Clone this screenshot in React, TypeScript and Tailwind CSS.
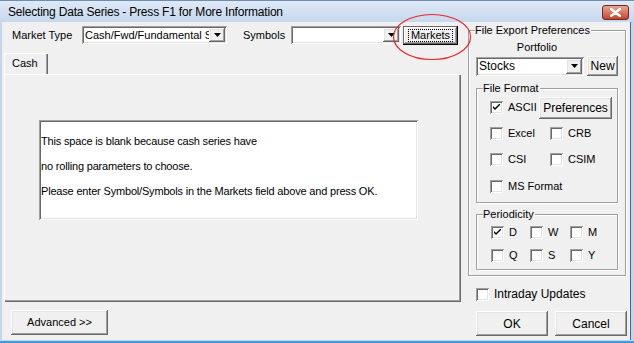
import React from 'react';

const raised =
  'shadow-[inset_-1px_-1px_0_#696969,inset_1px_1px_0_#ffffff,inset_-2px_-2px_0_#a0a0a0,inset_2px_2px_0_#e3e3e3]';
const sunken =
  'shadow-[inset_1px_1px_0_#a0a0a0,inset_-1px_-1px_0_#ffffff,inset_2px_2px_0_#696969,inset_-2px_-2px_0_#e3e3e3]';

const Arrow = () => (
  <div className={`w-[16px] h-full bg-[#f0f0f0] flex items-center justify-center ${raised}`}>
    <svg width="7" height="4" viewBox="0 0 7 4">
      <path d="M0 0h7L3.5 4z" fill="#000" />
    </svg>
  </div>
);

const Combo = ({ text, className }: { text: string; className: string }) => (
  <div className={`bg-white flex items-stretch p-[2px] ${sunken} ${className}`}>
    <div className="flex-1 overflow-hidden whitespace-nowrap pl-[1px] leading-[15px]">{text}</div>
    <Arrow />
  </div>
);

const Check = ({ checked }: { checked?: boolean }) => (
  <div className={`w-[13px] h-[13px] bg-white shrink-0 flex items-center justify-center ${sunken}`}>
    {checked && (
      <svg width="7" height="7" viewBox="0 0 7 7">
        <path d="M0 2l2 2 5-5v2L2 6 0 4z" fill="#000" />
      </svg>
    )}
  </div>
);

const CheckItem = ({ label, checked, className }: { label: string; checked?: boolean; className?: string }) => (
  <div className={`flex items-center gap-[5px] ${className ?? ''}`}>
    <Check checked={checked} />
    <span>{label}</span>
  </div>
);

const Group = ({ title, className, children }: { title: string; className: string; children: React.ReactNode }) => (
  <div className={`relative border border-[#a0a0a0] shadow-[1px_1px_0_#ffffff,inset_1px_1px_0_#ffffff] ${className}`}>
    <span className="absolute left-[6px] top-[-8px] bg-[#f0f0f0] leading-[14px] pr-[1px]">{title}</span>
    {children}
  </div>
);

const Button = ({ label, className }: { label: string; className: string }) => (
  <div className={`bg-[#f0f0f0] flex items-center justify-center ${raised} ${className}`}>{label}</div>
);

export default function App() {
  return (
    <div className="relative w-[634px] h-[343px] flex flex-col bg-[#c3d6ee] text-[11px] text-black font-['Liberation_Sans',Arial,sans-serif] overflow-hidden border-b-[2px] border-[#3f9be3]">
      {/* title bar */}
      <div className="h-[22px] shrink-0 flex items-center justify-between pl-[8px] pr-[5px] bg-gradient-to-b from-[#dfe9f6] to-[#c6d8ee] border-t border-[#6f8eb4]">
        <span className="text-[12px] tracking-[-0.2px] leading-none pt-[1px]">
          Selecting Data Series - Press F1 for More Information
        </span>
        <div className="w-[27px] h-[15px] mt-[2px] rounded-[3px] border border-[#6b2a22] bg-gradient-to-b from-[#e8a496] to-[#c7402b] flex items-center justify-center">
          <svg width="11" height="9" viewBox="0 0 11 9">
            <path d="M1 1l9 7M10 1L1 8" stroke="#fff" strokeWidth="2.4" strokeLinecap="round" />
          </svg>
        </div>
      </div>

      {/* client */}
      <div className="flex-1 flex ml-[2px] mr-[4px] mb-[1px] bg-[#f0f0f0] shadow-[1px_0_0_#4c6688]">
        {/* left column */}
        <div className="w-[460px] flex flex-col pl-[2px]">
          <div className="h-[20px] mt-[3px] flex items-center">
            <span className="w-[70px] ml-[8px]">Market Type</span>
            <Combo text="Cash/Fwd/Fundamental Series" className="w-[145px] h-[18px]" />
            <span className="w-[48px] ml-[16px]">Symbols</span>
            <Combo text="" className="w-[110px] h-[18px]" />
            <div className="ml-[2px] w-[55px] h-[19px] bg-[#f0f0f0] flex items-center justify-center shadow-[inset_-1px_-1px_0_#000000,inset_1px_1px_0_#696969,inset_-2px_-2px_0_#696969,inset_2px_2px_0_#ffffff,inset_-3px_-3px_0_#a0a0a0]">
              <span className="border border-dotted border-black px-[2px] leading-[11px]">Markets</span>
            </div>
          </div>

          <div className="mt-[8px] w-[44px] h-[21px] flex items-center pl-[8px] shadow-[inset_1px_1px_0_#ffffff,inset_-1px_0_0_#696969,inset_-2px_0_0_#a0a0a0]">
            Cash
          </div>
          <div className="w-[457px] h-[228px] pt-[46px] pl-[35px] shadow-[inset_1px_0_0_#ffffff,inset_0_1px_0_#ffffff,inset_-1px_-1px_0_#696969,inset_-2px_-2px_0_#a0a0a0]">
            <div className={`w-[379px] h-[100px] bg-white pt-[14px] pl-[2px] flex flex-col gap-[11px] leading-[14px] tracking-[-0.18px] ${sunken}`}>
              <span>This space is blank because cash series have</span>
              <span>no rolling parameters to choose.</span>
              <span>Please enter Symbol/Symbols in the Markets field above and press OK.</span>
            </div>
          </div>

          <Button label="Advanced >>" className="mt-[8px] ml-[7px] w-[97px] h-[25px]" />
        </div>

        {/* right column */}
        <div className="flex-1 flex flex-col pl-[6px]">
          <Group title="File Export Preferences" className="mt-[8px] w-[158px] h-[246px] px-[7px]">
            <div className="text-center leading-[14px] mt-[9px] pr-[20px]">Portfolio</div>
            <div className="flex items-center mt-[2px] gap-[3px]">
              <Combo text="Stocks" className="w-[109px] h-[19px] text-[12px]" />
              <Button label="New" className="w-[31px] h-[20px] text-[12px]" />
            </div>
            <Group title="File Format" className="mt-[12px] w-[142px] h-[115px] pl-[13px] pt-[7px]">
              <div className="flex items-center h-[23px]">
                <CheckItem label="ASCII" checked className="w-[49px]" />
                <Button label="Preferences" className="w-[73px] h-[22px] text-[12px]" />
              </div>
              <div className="flex items-center mt-[1px] h-[26px]">
                <CheckItem label="Excel" className="w-[60px]" />
                <CheckItem label="CRB" />
              </div>
              <div className="flex items-center h-[27px]">
                <CheckItem label="CSI" className="w-[60px]" />
                <CheckItem label="CSIM" />
              </div>
              <div className="flex items-center h-[27px]">
                <CheckItem label="MS Format" />
              </div>
            </Group>
            <Group title="Periodicity" className="mt-[11px] w-[142px] h-[56px] pl-[14px] pt-[5px]">
              <div className="flex items-center h-[24px]">
                <CheckItem label="D" checked className="w-[39px]" />
                <CheckItem label="W" className="w-[40px]" />
                <CheckItem label="M" />
              </div>
              <div className="flex items-center h-[23px]">
                <CheckItem label="Q" className="w-[39px]" />
                <CheckItem label="S" className="w-[40px]" />
                <CheckItem label="Y" />
              </div>
            </Group>
          </Group>
          <CheckItem label="Intraday Updates" className="mt-[9px] ml-[8px] text-[12px]" />
          <div className="flex gap-[7px] mt-[8px] ml-[8px] text-[12px]">
            <Button label="OK" className="w-[72px] h-[25px]" />
            <Button label="Cancel" className="w-[72px] h-[25px]" />
          </div>
        </div>
      </div>

      {/* annotation around Markets button */}
      <svg className="absolute left-[392px] top-[13px]" width="80" height="48" viewBox="0 0 80 48">
        <ellipse cx="40" cy="24" rx="38.5" ry="22.5" fill="none" stroke="#e8262a" strokeWidth="1.2" />
      </svg>
    </div>
  );
}
